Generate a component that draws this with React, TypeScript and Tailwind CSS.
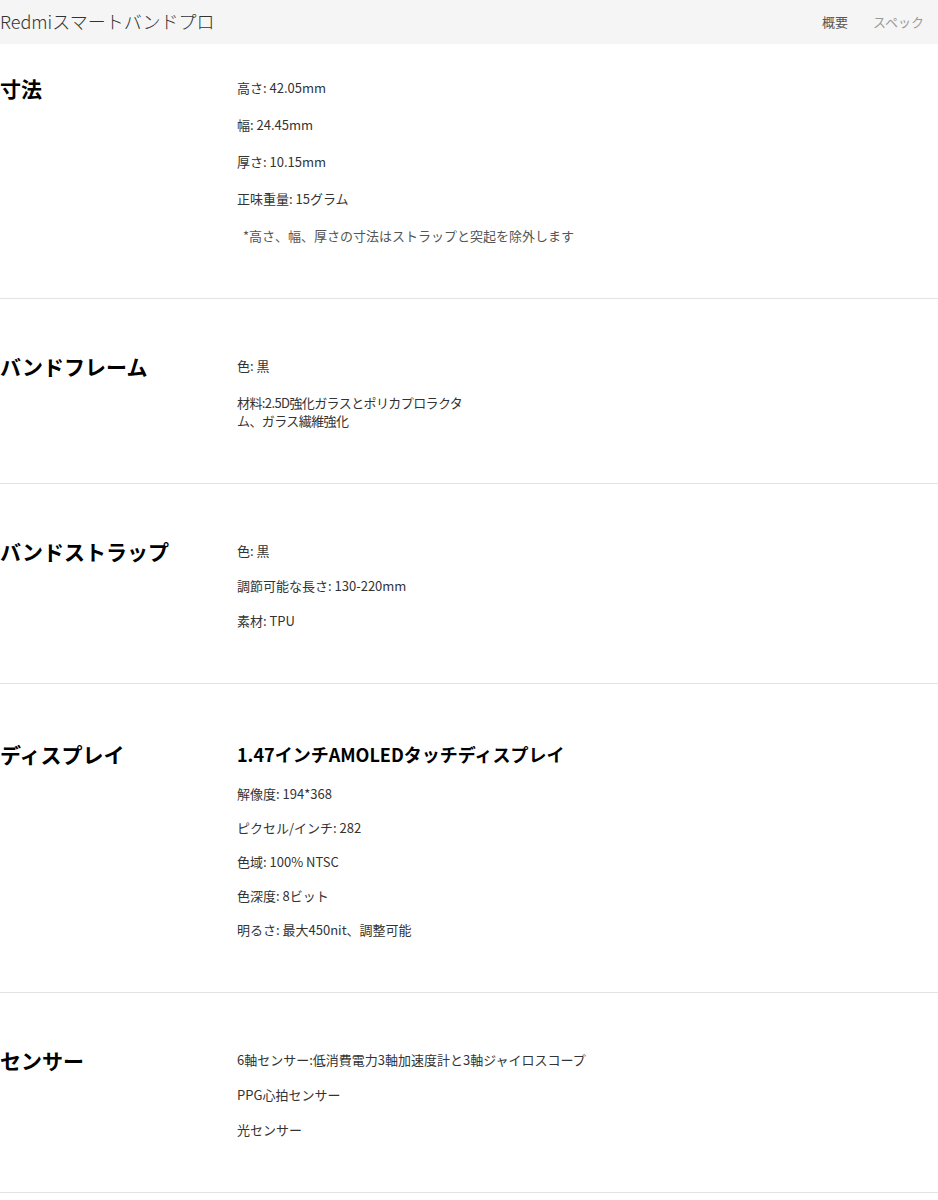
import React from 'react';

interface Section {
  title: string;
  lead?: string;
  items: React.ReactNode[];
  gap: string;
}

const sections: Section[] = [
  {
    title: '寸法',
    gap: 'gap-[19px]',
    items: [
      '高さ: 42.05mm',
      '幅: 24.45mm',
      '厚さ: 10.15mm',
      '正味重量: 15グラム',
      <span className="pl-[6px] text-[#555]">*高さ、幅、厚さの寸法はストラップと突起を除外します</span>,
    ],
  },
  {
    title: 'バンドフレーム',
    gap: 'gap-[19px]',
    items: [
      '色: 黒',
      <span className="tracking-[-0.6px]">
        材料:2.5D強化ガラスとポリカプロラクタ
        <br />
        ム、ガラス繊維強化
      </span>,
    ],
  },
  {
    title: 'バンドストラップ',
    gap: 'gap-[17px]',
    items: ['色: 黒', '調節可能な長さ: 130-220mm', '素材: TPU'],
  },
  {
    title: 'ディスプレイ',
    lead: '1.47インチAMOLEDタッチディスプレイ',
    gap: 'gap-[16px]',
    items: ['解像度: 194*368', 'ピクセル/インチ: 282', '色域: 100% NTSC', '色深度: 8ビット', '明るさ: 最大450nit、調整可能'],
  },
  {
    title: 'センサー',
    gap: 'gap-[17px]',
    items: ['6軸センサー:低消費電力3軸加速度計と3軸ジャイロスコープ', 'PPG心拍センサー', '光センサー'],
  },
];

export default function App() {
  return (
    <div className="w-[938px] min-h-[1200px] bg-white font-['Noto_Sans_CJK_JP','Noto_Sans',sans-serif] text-[#333]">
      {/* ヘッダー */}
      <header className="h-[44px] bg-[#f5f5f5] flex items-center justify-between pr-[14px]">
        <span className="text-[18px] font-light text-[#333] leading-none pb-[2px]">Redmiスマートバンドプロ</span>
        <nav className="flex items-center gap-[25px] text-[13px]">
          <span className="text-[#555]">概要</span>
          <span className="text-[#999]">スペック</span>
        </nav>
      </header>

      {sections.map((s, i) => (
        <section
          key={s.title}
          className={`flex border-b border-[#e3e3e3] pb-[53px] ${i === 0 ? 'pt-[35px]' : 'pt-[58px]'}`}
        >
          <h2
            className={`w-[237px] shrink-0 text-[21px] font-bold text-black leading-[18px] ${s.lead ? 'mt-[3px]' : ''}`}
          >
            {s.title}
          </h2>
          <div className="flex flex-col">
            {s.lead && (
              <p className="text-[18px] font-bold text-black leading-[24px] mb-[19px]">{s.lead}</p>
            )}
            <div className={`flex flex-col text-[13px] leading-[18px] ${s.gap}`}>
              {s.items.map((item, j) => (
                <p key={j}>{item}</p>
              ))}
            </div>
          </div>
        </section>
      ))}
    </div>
  );
}
